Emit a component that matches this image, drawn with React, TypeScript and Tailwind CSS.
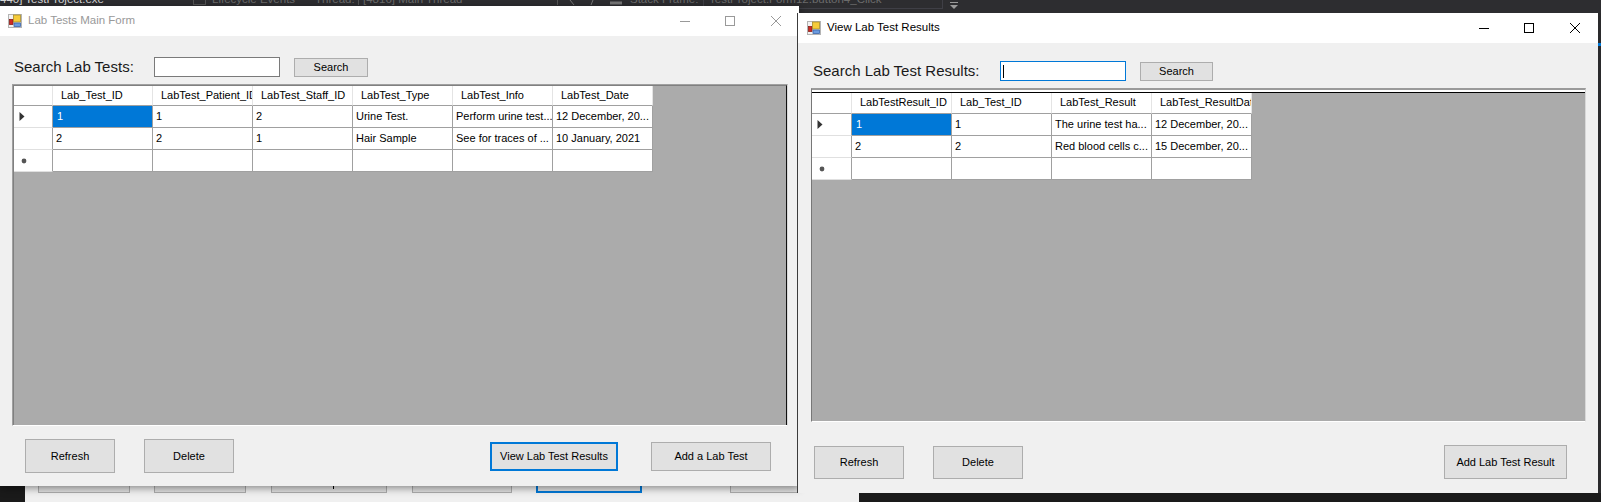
import React from "react";

function AppIcon() {
  return (
    <svg width="14" height="14" viewBox="0 0 14 14" className="shrink-0">
      <rect x="0.5" y="0.5" width="13" height="13" fill="#f2f2f2" stroke="#b4b4b4" />
      <rect x="1.5" y="5.5" width="3.5" height="5" fill="#cf2a22" stroke="#8a1f1a" strokeWidth="0.8" />
      <rect x="5.5" y="1" width="7" height="7" fill="#f6cb3a" stroke="#a98d2b" strokeWidth="0.8" />
      <rect x="6" y="9" width="6.5" height="3.5" fill="#6b9be0" stroke="#3b64a8" strokeWidth="0.8" />
    </svg>
  );
}

function Caption({ color }: { color: string }) {
  return (
    <div className="ml-auto mr-[18px] flex items-center">
      <svg width="10" height="10" viewBox="0 0 10 10" stroke={color} fill="none">
        <path d="M0 5.5H10" />
      </svg>
      <svg width="10" height="10" viewBox="0 0 10 10" stroke={color} fill="none" className="ml-[35px]">
        <rect x="0.5" y="0.5" width="9" height="9" />
      </svg>
      <svg width="10" height="10" viewBox="0 0 10 10" stroke={color} fill="none" className="ml-[36px]">
        <path d="M0 0L10 10M10 0L0 10" />
      </svg>
    </div>
  );
}

function Btn({ className, children }: { className: string; children?: React.ReactNode }) {
  return (
    <div className={"flex shrink-0 items-center justify-center border bg-[#e1e1e1] text-[11px] text-black " + className}>
      {children}
    </div>
  );
}

function Triangle() {
  return (
    <svg width="6" height="9" viewBox="0 0 6 9">
      <path d="M0.5 0L5.5 4.5L0.5 9Z" fill="#333333" />
    </svg>
  );
}

function Star() {
  return (
    <svg width="6" height="6" viewBox="0 0 6 6">
      <circle cx="3" cy="3" r="2.4" fill="#555555" />
    </svg>
  );
}

function DataGrid({
  columns,
  rows,
  gridClass,
  headerClass,
}: {
  columns: string[];
  rows: string[][];
  gridClass: string;
  headerClass: string;
}) {
  const marks = [<Triangle key="t" />, null, <Star key="s" />];
  return (
    <div className={"grid w-fit bg-white text-[11px] text-black " + gridClass}>
      <div className={"border-r border-b border-r-[#e4e4e4] border-b-[#a0a0a0] " + headerClass} />
      {columns.map((c) => (
        <div
          key={c}
          className={
            "overflow-hidden whitespace-nowrap border-r border-b border-r-[#e4e4e4] border-b-[#a0a0a0] pl-2 leading-[19px] " +
            headerClass
          }
        >
          {c}
        </div>
      ))}
      {rows.map((row, r) => (
        <React.Fragment key={r}>
          <div
            className={
              "flex h-[22px] items-center border-r border-b border-r-[#a0a0a0] border-b-[#e0e0e0] " +
              (r === 2 ? "pl-[7px]" : "pl-[5px]")
            }
          >
            {marks[r]}
          </div>
          {row.map((cell, c) => (
            <div
              key={c}
              className={
                "h-[22px] overflow-hidden whitespace-nowrap border-r border-b border-[#a0a0a0] leading-[21px] " +
                (r === 0 && c === 0 ? "bg-[#0078d7] pl-1 text-white" : "pl-[3px]")
              }
            >
              {cell}
            </div>
          ))}
        </React.Fragment>
      ))}
    </div>
  );
}

export default function App() {
  return (
    <div className="relative h-[502px] w-[1601px] overflow-hidden bg-[#1a1a1a] font-['Liberation_Sans',Arial,sans-serif]">
      {/* IDE toolbar behind the windows */}
      <div className="flex h-[13px] items-start overflow-hidden bg-[#2d2d30] text-[11.5px] leading-[12px] text-[#6b6b6b]">
        <span className="-mt-[7px] w-[193px] shrink-0 whitespace-nowrap text-[#d8d8d8]">440] TestProject.exe</span>
        <span className="h-[5px] w-[13px] shrink-0 border border-t-0 border-[#555]" />
        <span className="-mt-[7px] ml-[6px] w-[103px] shrink-0">Lifecycle Events</span>
        <span className="-mt-[7px] w-[38px] shrink-0">Thread:</span>
        <span className="ml-[5px] h-[5px] w-px shrink-0 bg-[#555]" />
        <span className="-mt-[7px] ml-1 w-[194px] shrink-0">[4816] Main Thread</span>
        <span className="h-[5px] w-px shrink-0 bg-[#555]" />
        <svg width="55" height="6" viewBox="0 0 55 6" className="ml-[11px] shrink-0" fill="none" stroke="#777777">
          <path d="M1 0L5 5M24 0L22 5" />
          <path d="M41 3H53" strokeWidth="3" />
        </svg>
        <span className="-mt-[7px] ml-[6px] w-[73px] shrink-0">Stack Frame:</span>
        <div className="h-[9px] w-[240px] shrink-0 border border-t-0 border-[#3f3f46] pl-[5px]">
          <span className="-mt-[7px] block">TestProject.Form12.button4_Click</span>
        </div>
        <svg width="8" height="7" viewBox="0 0 8 7" className="ml-[7px] mt-[2px] shrink-0" fill="#9a9a9a">
          <path d="M0 0H8V1H0ZM0 3H8L4 7Z" />
        </svg>
      </div>

      {/* Far right sliver of the IDE */}
      <div className="absolute left-[1598px] top-[13px] h-[480px] w-[3px] bg-[#2a2a2c]">
        <div className="mt-[30px] h-[3px] w-[3px] bg-[#0078d7]" />
      </div>

      {/* Form behind the two windows */}
      <div className="absolute left-[25px] top-[470px] flex h-[32px] w-[834px] items-start bg-[#f0f0f0]">
        <Btn className="ml-[13px] h-[23px] w-[92px] border-[#adadad]" />
        <Btn className="ml-[24px] h-[23px] w-[92px] border-[#adadad]" />
        <Btn className="ml-[25px] h-[23px] w-[116px] border-[#adadad]" />
        <Btn className="ml-[25px] h-[23px] w-[100px] border-[#adadad]" />
        <Btn className="ml-[24px] h-[23px] w-[106px] border-2 border-[#0078d7]" />
        <Btn className="ml-[88px] h-[23px] w-[90px] border-[#adadad]" />
        <div className="absolute left-[308px] top-[16px] h-[3px] w-px bg-black" />
      </div>

      {/* Lab Tests Main Form */}
      <div className="absolute left-0 top-[6px] flex h-[480px] w-[799px] flex-col bg-[#f0f0f0] shadow-[0_2px_8px_rgba(0,0,0,0.45)]">
        <div className="flex h-[30px] shrink-0 items-center bg-white pl-2">
          <AppIcon />
          <span className="ml-[6px] text-[11.5px] text-[#999999]">Lab Tests Main Form</span>
          <Caption color="#999999" />
        </div>
        <div className="ml-[14px] mt-[21px] flex h-[20px] items-center">
          <div className="w-[140px] text-[15px] text-[#1a1a1a]">Search Lab Tests:</div>
          <div className="h-[20px] w-[126px] border border-[#7a7a7a] bg-white" />
          <Btn className="ml-[14px] mt-[1px] h-[19px] w-[74px] border-[#adadad]">Search</Btn>
        </div>
        <div className="ml-3 mt-[7px] h-[342px] w-[776px] border border-t-[#a0a0a0] border-l-[#a0a0a0] border-r-[#d8d8d8] border-b-white">
          <div className="h-full border-t border-l border-r border-t-[#808080] border-l-[#808080] border-r-[#111111] bg-[#ababab]">
            <DataGrid
              gridClass="grid-cols-[39px_repeat(6,100px)]"
              headerClass="h-[20px]"
              columns={["Lab_Test_ID", "LabTest_Patient_ID", "LabTest_Staff_ID", "LabTest_Type", "LabTest_Info", "LabTest_Date"]}
              rows={[
                ["1", "1", "2", "Urine Test.", "Perform urine test...", "12 December, 20..."],
                ["2", "2", "1", "Hair Sample", "See for traces of ...", "10 January, 2021"],
                ["", "", "", "", "", ""],
              ]}
            />
          </div>
        </div>
        <div className="mt-[13px] flex h-[34px] items-center">
          <Btn className="ml-[25px] h-[34px] w-[90px] border-[#adadad]">Refresh</Btn>
          <Btn className="ml-[29px] h-[34px] w-[90px] border-[#adadad]">Delete</Btn>
          <Btn className="ml-[256px] h-[29px] w-[128px] border-2 border-[#0078d7]">View Lab Test Results</Btn>
          <Btn className="ml-[33px] h-[29px] w-[120px] border-[#adadad]">Add a Lab Test</Btn>
        </div>
      </div>

      {/* View Lab Test Results */}
      <div className="absolute left-[797px] top-[13px] flex h-[480px] w-[801px] flex-col border-l border-[#3c3c3c] bg-[#f0f0f0]">
        <div className="flex h-[30px] shrink-0 items-center bg-white pl-[9px]">
          <AppIcon />
          <span className="ml-[6px] text-[11.5px] text-black">View Lab Test Results</span>
          <Caption color="#000000" />
        </div>
        <div className="ml-[15px] mt-[18px] flex h-[20px] items-center">
          <div className="w-[187px] text-[15px] text-[#1a1a1a]">Search Lab Test Results:</div>
          <div className="flex h-[20px] w-[126px] items-center border border-[#0078d7] bg-white pl-[2px]">
            <div className="h-[13px] w-px bg-black" />
          </div>
          <Btn className="ml-[14px] mt-[1px] h-[19px] w-[73px] border-[#adadad]">Search</Btn>
        </div>
        <div className="ml-[13px] mt-[7px] h-[334px] w-[775px] border border-t-2 border-t-[#9a9a9a] border-l-[#777777] border-r-[#d8d8d8] border-b-white bg-white pt-[2px]">
          <div className="h-[329px] border-t border-t-black bg-[#ababab]">
            <DataGrid
              gridClass="grid-cols-[40px_repeat(4,100px)]"
              headerClass="h-[21px]"
              columns={["LabTestResult_ID", "Lab_Test_ID", "LabTest_Result", "LabTest_ResultDate"]}
              rows={[
                ["1", "1", "The urine test ha...", "12 December, 20..."],
                ["2", "2", "Red blood cells c...", "15 December, 20..."],
                ["", "", "", ""],
              ]}
            />
          </div>
        </div>
        <div className="mt-[23px] flex h-[34px] items-end">
          <Btn className="ml-4 h-[33px] w-[90px] border-[#adadad]">Refresh</Btn>
          <Btn className="ml-[29px] h-[33px] w-[90px] border-[#adadad]">Delete</Btn>
          <Btn className="ml-[421px] h-[34px] w-[123px] border-[#adadad]">Add Lab Test Result</Btn>
        </div>
      </div>
    </div>
  );
}
